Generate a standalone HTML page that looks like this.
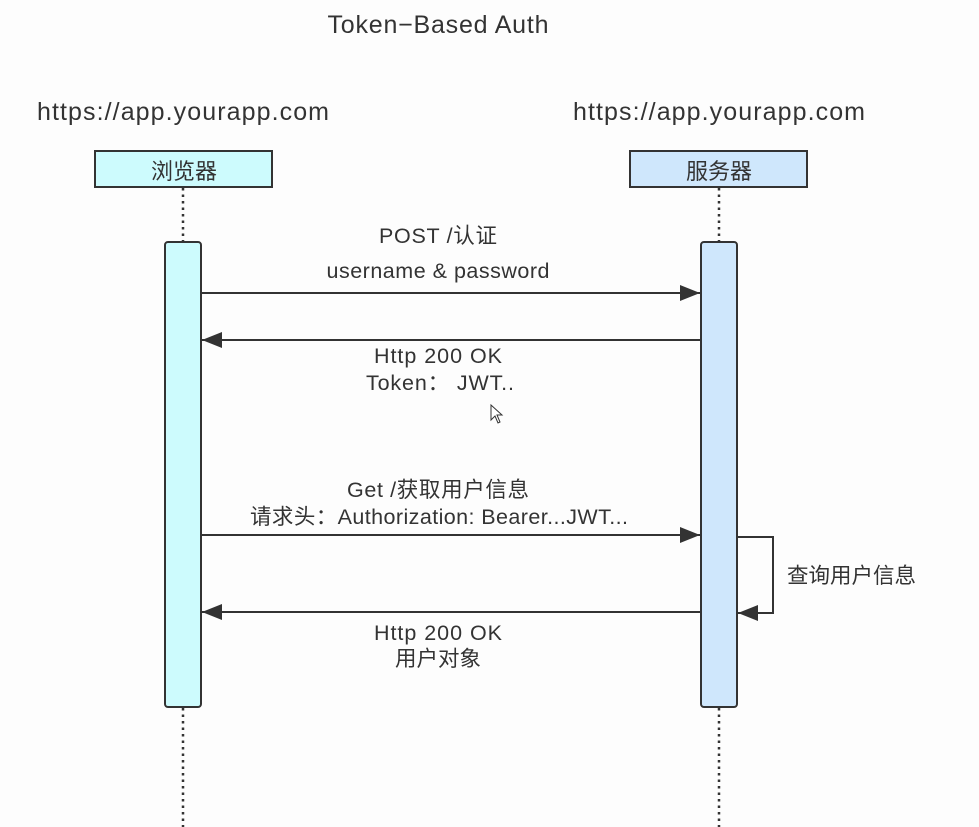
<!DOCTYPE html>
<html><head><meta charset="utf-8"><style>
html,body{margin:0;padding:0;background:#fdfdfd;width:979px;height:827px;overflow:hidden}
svg{display:block}
text{font-family:"Liberation Sans","Noto Sans CJK SC",sans-serif;fill:#333}
</style></head><body>
<svg width="979" height="827" viewBox="0 0 979 827" xmlns="http://www.w3.org/2000/svg">
<defs><marker id="a" viewBox="0 0 10 10" refX="10" refY="5" markerWidth="20" markerHeight="20" markerUnits="userSpaceOnUse" orient="auto"><path d="M0,1 L10,5 L0,9 Z" fill="#333"/></marker></defs>
<text x="438" y="33" font-size="25" text-anchor="middle" textLength="221">Token−Based Auth</text>
<text x="37" y="120" font-size="25" textLength="292">https://app.yourapp.com</text>
<text x="573" y="120" font-size="25" textLength="292">https://app.yourapp.com</text>
<g stroke="#333" stroke-width="2.5" stroke-dasharray="2.5,4">
<line x1="183" y1="188" x2="183" y2="242"/><line x1="183" y1="708" x2="183" y2="827"/>
<line x1="719" y1="188" x2="719" y2="242"/><line x1="719" y1="708" x2="719" y2="827"/>
</g>
<rect x="95" y="151" width="177" height="36" fill="#cdfbfd" stroke="#333" stroke-width="2"/>
<text x="184" y="179" font-size="22" text-anchor="middle">浏览器</text>
<rect x="630" y="151" width="177" height="36" fill="#cfe7fc" stroke="#333" stroke-width="2"/>
<text x="719" y="179" font-size="22" text-anchor="middle">服务器</text>
<rect x="165" y="242" width="36" height="465" rx="3" fill="#cdfbfd" stroke="#333" stroke-width="2"/>
<rect x="701" y="242" width="36" height="465" rx="3" fill="#cfe7fc" stroke="#333" stroke-width="2"/>
<g stroke="#333" stroke-width="2" fill="none">
<line x1="202" y1="293" x2="700" y2="293" marker-end="url(#a)"/>
<line x1="700" y1="340" x2="202" y2="340" marker-end="url(#a)"/>
<line x1="202" y1="535" x2="700" y2="535" marker-end="url(#a)"/>
<line x1="700" y1="612" x2="202" y2="612" marker-end="url(#a)"/>
<polyline points="738,537 773,537 773,613 738,613" marker-end="url(#a)"/>
</g>
<g font-size="21.5" text-anchor="middle">
<text x="438" y="243" textLength="118">POST /认证</text>
<text x="438" y="278" textLength="223">username &amp; password</text>
<text x="438" y="363" textLength="128">Http 200 OK</text>
<text x="440" y="390" textLength="148">Token：  JWT..</text>
<text x="438" y="497" textLength="182">Get /获取用户信息</text>
<text x="439" y="524" textLength="378">请求头：Authorization: Bearer...JWT...</text>
<text x="438" y="640" textLength="128">Http 200 OK</text>
<text x="438" y="666">用户对象</text>
</g>
<text x="787" y="583" font-size="21.5">查询用户信息</text>
<path d="M491,405 L491,420 L495,416 L498,423 L500,422 L497,415 L502,415 Z" fill="#fff" stroke="#333" stroke-width="1"/>
</svg>
</body></html>
